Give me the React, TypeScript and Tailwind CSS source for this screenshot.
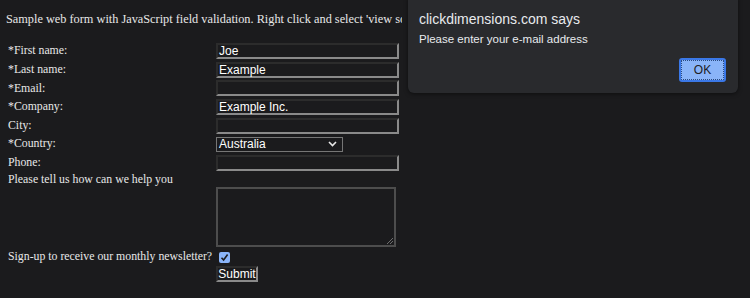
const serif = "font-['Liberation_Serif','Times_New_Roman',serif]"
const sans = "font-['Liberation_Sans',Arial,sans-serif]"

const inset =
  'border-2 border-t-[#2c2c2c] border-l-[#2c2c2c] border-r-[#8a8a8a] border-b-[#8a8a8a]'

interface Row {
  label: string
  value?: string
  kind?: 'text' | 'select'
}

const ROWS: Row[] = [
  { label: '*First name:', value: 'Joe' },
  { label: '*Last name:', value: 'Example' },
  { label: '*Email:', value: '' },
  { label: '*Company:', value: 'Example Inc.' },
  { label: 'City:', value: '' },
  { label: '*Country:', value: 'Australia', kind: 'select' },
  { label: 'Phone:', value: '' },
]

function Field({ row }: { row: Row }) {
  if (row.kind === 'select') {
    return (
      <div className={`flex h-[15px] w-[127px] items-center justify-between border border-[#767676] bg-[#1b1b1d] pl-[2px] pr-[5px] text-[12px] leading-none text-white ${sans}`}>
        <span>{row.value}</span>
        <svg width="9" height="6" viewBox="0 0 9 6">
          <path d="M1 1 L4.5 4.5 L8 1" fill="none" stroke="#e8e8e8" strokeWidth="1.6" />
        </svg>
      </div>
    )
  }
  return (
    <div className={`flex h-[16px] w-[183px] items-center bg-[#1b1b1d] px-[1px] text-[12px] leading-none text-white ${inset} ${sans}`}>
      {row.value}
    </div>
  )
}

export default function App() {
  return (
    <div className={`relative h-[298px] w-[750px] overflow-hidden bg-[#1b1b1d] text-[11.8px] text-[#e8e8e8] ${serif}`}>
      <div className="w-[402px] overflow-hidden pl-[6px] pt-[11px]">
        <p className="h-[16px] whitespace-nowrap text-[12.3px] leading-[16px]">
          Sample web form with JavaScript field validation. Right click and select 'view source' to see the code.
        </p>
      </div>

      <div className="mt-[15px] flex flex-col pl-[8px]">
        {ROWS.map((row) => (
          <div key={row.label} className="flex h-[18.6px] items-center">
            <div className="w-[208px] whitespace-nowrap leading-none">{row.label}</div>
            <Field row={row} />
          </div>
        ))}
        <div className="flex h-[15px] items-center whitespace-nowrap leading-none">
          Please tell us how can we help you
        </div>

        <div className="flex">
          <div className="w-[208px]" />
          <div className="relative h-[60px] w-[180px] border-2 border-[#4d4d4d] bg-[#1b1b1d]">
            <svg className="absolute bottom-0 right-0" width="8" height="8" viewBox="0 0 8 8">
              <path d="M7 1 L1 7 M7 4 L4 7" stroke="#6e6e6e" strokeWidth="1" />
            </svg>
          </div>
        </div>

        <div className="mt-[3px] flex h-[14px] items-center">
          <span className="whitespace-nowrap leading-none">Sign-up to receive our monthly newsletter?</span>
          <span className="ml-[7px] flex h-[11px] w-[11px] items-center justify-center rounded-[2px] bg-[#8ab4f8]">
            <svg width="9" height="9" viewBox="0 0 9 9">
              <path d="M1.5 4.8 L3.6 7 L7.6 1.6" fill="none" stroke="#1b1b1d" strokeWidth="1.6" />
            </svg>
          </span>
        </div>

        <div className="mt-[2px] flex">
          <div className="w-[208px]" />
          <button
            className={`h-[16px] w-[42px] border-2 border-t-[#2c2c2c] border-l-[#2c2c2c] border-r-[#8a8a8a] border-b-[#8a8a8a] bg-[#1b1b1d] text-[12px] leading-none text-white ${sans}`}
          >
            Submit
          </button>
        </div>
      </div>

      {/* alert dialog */}
      <div className={`absolute left-[408px] top-[-6px] w-[330px] rounded-[6px] bg-[#292a2d] pb-[11px] pl-[11px] pr-[12px] pt-[17px] shadow-[0_1px_4px_rgba(0,0,0,0.5)] ${sans}`}>
        <div className="text-[14px] leading-[16px] text-[#e8eaed]">clickdimensions.com says</div>
        <div className="mt-[5px] text-[11.5px] leading-[14px] text-[#e8eaed]">Please enter your e-mail address</div>
        <div className="mt-[12px] flex justify-end">
          <button className="h-[24px] w-[47px] rounded-[3px] border-2 border-[#3b78e7] bg-[#8ab4f8] text-[12px] text-[#202124] outline-1 outline-dotted outline-offset-[-3px] outline-[#2a4a80]">
            OK
          </button>
        </div>
      </div>
    </div>
  )
}
